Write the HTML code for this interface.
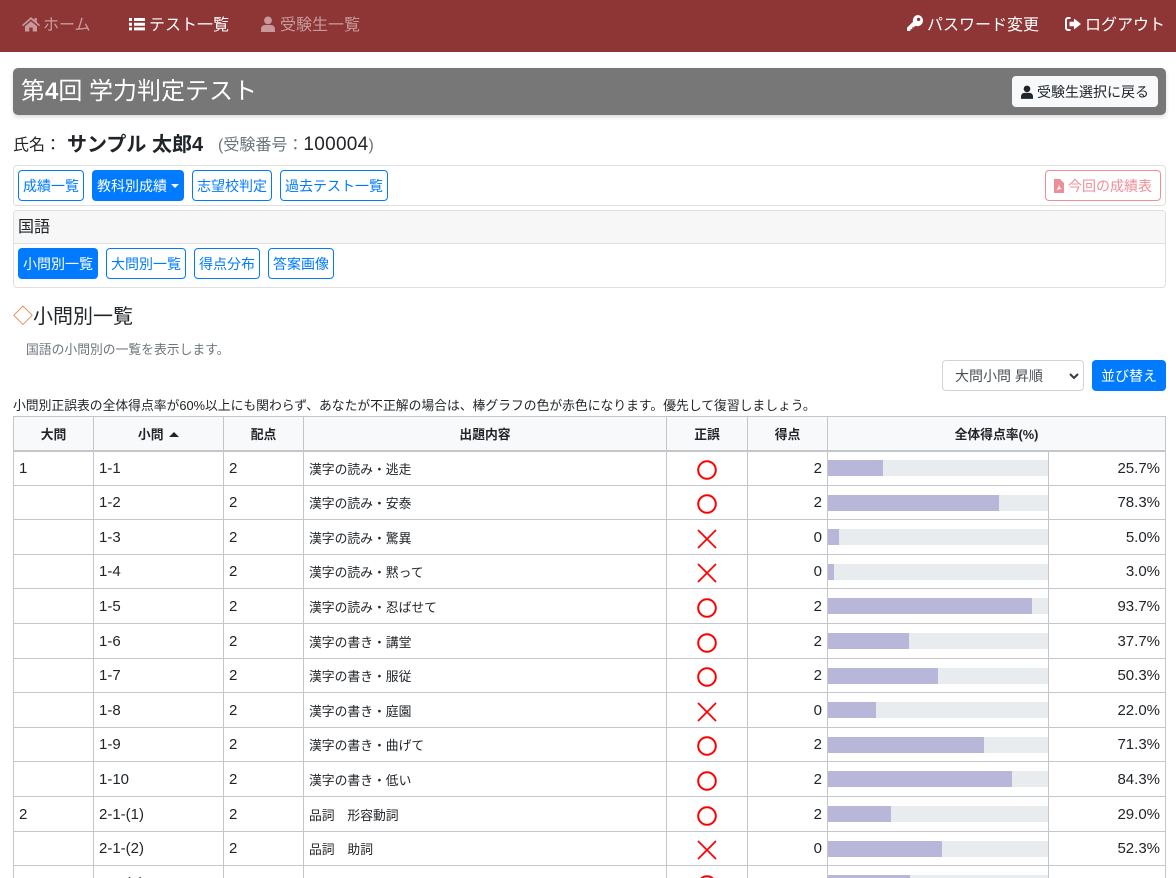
<!DOCTYPE html>
<html lang="ja">
<head>
<meta charset="utf-8">
<title>小問別一覧</title>
<style>
*{box-sizing:border-box}
html,body{margin:0;padding:0;width:1176px;height:878px;overflow:hidden;background:#fff}
body{font-family:"Liberation Sans","Noto Sans CJK JP",sans-serif;color:#212529;font-size:16px;position:relative}
.abs{position:absolute;white-space:nowrap}
nav{position:absolute;left:0;top:0;width:1176px;height:52px;background:#8e3535}
nav .i{position:absolute;top:15px;line-height:22px;font-size:16px;color:#fff;white-space:nowrap}
nav .dim{color:rgba(255,255,255,.5)}
nav svg{position:absolute;left:0}
.bar{position:absolute;left:13px;top:68px;width:1153px;height:47px;background:#777;border-radius:5px;box-shadow:0 2px 4px rgba(0,0,0,.15)}
.bar h1{position:absolute;left:8px;top:6px;margin:0;font-size:24px;font-weight:400;line-height:36px;color:#fff;white-space:nowrap}
.btn{position:absolute;display:block;height:31px;line-height:30px;font-size:14px;text-align:center;border:1px solid #007bff;border-radius:4px;color:#007bff;background:#fff;white-space:nowrap}
.btn.on{background:#007bff;color:#fff}
.panel{position:absolute;left:13px;width:1153px;border:1px solid #dfdfdf;border-radius:4px}
table{position:absolute;left:13px;top:416px;width:1152px;border-collapse:collapse;table-layout:fixed;font-size:15px}
th,td{border:1px solid #c4c6ca;padding:0 5px;overflow:hidden;white-space:nowrap}
th{height:34px;padding-top:1px;background:#f8f9fa;font-size:12.8px;font-weight:700;text-align:center;border-bottom:2px solid #c4c6ca}
td{vertical-align:middle}
td.q{font-size:12.8px}
td.r{text-align:right}
td.c{text-align:center;padding:0}
td.c svg{display:block;margin:3px auto 0}
td.b{padding:0;border-right:1px solid #c4c6ca}
.pg{height:16px;background:#e9ecef}
.pg i{display:block;height:16px;background:#b8b7d9}
</style>
</head>
<body>
<nav>
  <div class="i dim" style="left:22px;padding-left:21px"><svg width="18" height="16" viewBox="0 0 18 16" style="top:1px"><path fill="#c69a9a" d="M9 1 L12.5 4V2h2.3v4.1L18 9l-1 1.2L9 3.4 1 10.2 0 9z M3 10.3 9 5.2l6 5.1V15.5h-4.3v-4H7.3v4H3z"/></svg>ホーム</div>
  <div class="i" style="left:129px;padding-left:20px"><svg width="16" height="16" viewBox="0 0 16 16" style="top:1px"><path fill="#fff" d="M0 2h3v3H0zM5 2h11v3H5zM0 6.7h3v3H0zM5 6.7h11v3H5zM0 11.4h3v3H0zM5 11.4h11v3H5z"/></svg>テスト一覧</div>
  <div class="i dim" style="left:261px;padding-left:19px"><svg width="14" height="16" viewBox="0 0 14 16" style="top:1px"><circle cx="7" cy="4.4" r="3.9" fill="#c69a9a"/><path fill="#c69a9a" d="M0 16v-2.6C0 10.6 2 9 4.2 9h5.6C12 9 14 10.6 14 13.400V16z"/></svg>受験生一覧</div>
  <div class="i" style="left:907px;padding-left:20px"><svg width="16" height="17" viewBox="0 0 16 17" style="top:0"><path fill="#fff" d="M10.300 0a5.600 5.600 0 1 1-2 10.800L7 12.200H5.300v1.900H3.400V16H0v-3.200l6-6A5.600 5.600 0 0 1 10.300 0zm1.300 2.700a1.700 1.700 0 1 0 0 3.400 1.700 1.700 0 0 0 0-3.400z"/></svg>パスワード変更</div>
  <div class="i" style="left:1065px;padding-left:20px"><svg width="16" height="14" viewBox="0 0 16 14" style="top:2px"><path fill="#fff" d="M5.500 0v2H3a1 1 0 0 0-1 1v8a1 1 0 0 0 1 1h2.500v2H3a3 3 0 0 1-3-3V3a3 3 0 0 1 3-3z"/><path fill="#fff" d="M9 1.500 16 7l-7 5.500V9.300H4.500V4.700H9z"/></svg>ログアウト</div>
</nav>

<div class="bar">
  <h1>第<b>4</b>回 学力判定テスト</h1>
  <div class="abs" style="left:999px;top:8px;width:146px;height:31px;background:#f8f9fa;border-radius:4px;font-size:14px;line-height:32px;padding-left:25px;color:#212529">
    <svg width="12" height="14" viewBox="0 0 14 16" style="position:absolute;left:9px;top:9px"><circle cx="7" cy="4.400" r="3.900" fill="#212529"/><path fill="#212529" d="M0 16v-2.600C0 10.600 2 9 4.200 9h5.600C12 9 14 10.600 14 13.400V16z"/></svg>受験生選択に戻る
  </div>
</div>

<div class="abs" style="left:13px;top:134px;line-height:24px">氏名：</div>
<div class="abs" style="left:67px;top:131px;line-height:28px;font-size:20px;font-weight:700">サンプル 太郎4</div>
<div class="abs" style="left:218px;top:133px;line-height:24px;color:#6c757d">(受験番号：<span style="color:#212529;font-size:19px;font-weight:400;letter-spacing:.3px">100004</span>)</div>

<div class="panel" style="top:165px;height:41px"></div>
<a class="btn" style="left:18px;top:170px;width:66px">成績一覧</a>
<a class="btn on" style="left:92px;top:170px;width:92px;padding-right:12px">教科別成績<span style="position:absolute;right:4px;top:13px;border:4px solid transparent;border-top-color:#fff;border-bottom:0"></span></a>
<a class="btn" style="left:192px;top:170px;width:80px">志望校判定</a>
<a class="btn" style="left:280px;top:170px;width:108px">過去テスト一覧</a>
<a class="btn" style="left:1045px;top:170px;width:116px;border-color:#ee8e98;color:#f08f99;padding-left:14px"><svg width="10" height="14" viewBox="0 0 10 14" style="position:absolute;left:8px;top:8px"><path fill="#ee8e98" d="M0 0h6l4 4v10H0z"/><path fill="#fff" d="M2 11.500C4 10 5 7 4.800 5.300 5.500 8 6.300 9.300 8 10 6 10 4 10.300 2 11.500z"/></svg>今回の成績表</a>

<div class="panel" style="top:210px;height:78px"></div>
<div class="abs" style="left:14px;top:211px;width:1151px;height:33px;background:#f7f7f7;border-bottom:1px solid #dfdfdf;border-radius:3px 3px 0 0;padding-left:4px;line-height:33px;font-size:16px">国語</div>
<a class="btn on" style="left:18px;top:248px;width:80px">小問別一覧</a>
<a class="btn" style="left:106px;top:248px;width:80px">大問別一覧</a>
<a class="btn" style="left:194px;top:248px;width:66px">得点分布</a>
<a class="btn" style="left:268px;top:248px;width:66px">答案画像</a>

<div class="abs" style="left:13px;top:303px;font-size:20px;line-height:28px"><span style="color:#e0792c">◇</span>小問別一覧</div>
<div class="abs" style="left:26px;top:341px;font-size:12.8px;line-height:18px;color:#6c757d">国語の小問別の一覧を表示します。</div>

<div class="abs" style="left:942px;top:360px;width:142px;height:31px;border:1px solid #ced4da;border-radius:4px;font-size:14px;line-height:30px;padding-left:12px;color:#495057">大問小問 昇順
  <svg width="10" height="7" viewBox="0 0 10 7" style="position:absolute;right:4px;top:12px"><path d="M1 1l4 4 4-4" fill="none" stroke="#343a40" stroke-width="2"/></svg>
</div>
<a class="btn on" style="left:1092px;top:360px;width:74px">並び替え</a>

<div class="abs" style="left:13px;top:397px;font-size:12.8px;line-height:18px">小問別正誤表の全体得点率が60%以上にも関わらず、あなたが不正解の場合は、棒グラフの色が赤色になります。優先して復習しましょう。</div>

<table>
<colgroup><col style="width:80px"><col style="width:130px"><col style="width:80px"><col style="width:363px"><col style="width:81px"><col style="width:80px"><col style="width:221px"><col style="width:117px"></colgroup>
<tr><th>大問</th><th>小問 <span style="display:inline-block;border:5px solid transparent;border-bottom-color:#212529;border-top:0;vertical-align:2px;margin-left:2px"></span></th><th>配点</th><th>出題内容</th><th>正誤</th><th>得点</th><th colspan="2">全体得点率(%)</th></tr>

<tr style="height:35px"><td>1</td><td>1-1</td><td>2</td><td class="q">漢字の読み・逃走</td><td class="c"><svg width="20" height="20"><circle cx="10" cy="10" r="8.800" fill="none" stroke="#f00" stroke-width="2"/></svg></td><td class="r">2</td><td class="b"><div class="pg"><i style="width:25.2%"></i></div></td><td class="r">25.7%</td></tr>
<tr style="height:34px"><td></td><td>1-2</td><td>2</td><td class="q">漢字の読み・安泰</td><td class="c"><svg width="20" height="20"><circle cx="10" cy="10" r="8.800" fill="none" stroke="#f00" stroke-width="2"/></svg></td><td class="r">2</td><td class="b"><div class="pg"><i style="width:77.7%"></i></div></td><td class="r">78.3%</td></tr>
<tr style="height:35px"><td></td><td>1-3</td><td>2</td><td class="q">漢字の読み・驚異</td><td class="c"><svg width="20" height="20"><path d="M1 1l18 18M19 1L1 19" fill="none" stroke="#f00" stroke-width="1.700"/></svg></td><td class="r">0</td><td class="b"><div class="pg"><i style="width:5%"></i></div></td><td class="r">5.0%</td></tr>
<tr style="height:34px"><td></td><td>1-4</td><td>2</td><td class="q">漢字の読み・黙って</td><td class="c"><svg width="20" height="20"><path d="M1 1l18 18M19 1L1 19" fill="none" stroke="#f00" stroke-width="1.700"/></svg></td><td class="r">0</td><td class="b"><div class="pg"><i style="width:2.8%"></i></div></td><td class="r">3.0%</td></tr>
<tr style="height:35px"><td></td><td>1-5</td><td>2</td><td class="q">漢字の読み・忍ばせて</td><td class="c"><svg width="20" height="20"><circle cx="10" cy="10" r="8.800" fill="none" stroke="#f00" stroke-width="2"/></svg></td><td class="r">2</td><td class="b"><div class="pg"><i style="width:92.8%"></i></div></td><td class="r">93.7%</td></tr>
<tr style="height:35px"><td></td><td>1-6</td><td>2</td><td class="q">漢字の書き・講堂</td><td class="c"><svg width="20" height="20"><circle cx="10" cy="10" r="8.800" fill="none" stroke="#f00" stroke-width="2"/></svg></td><td class="r">2</td><td class="b"><div class="pg"><i style="width:37%"></i></div></td><td class="r">37.7%</td></tr>
<tr style="height:34px"><td></td><td>1-7</td><td>2</td><td class="q">漢字の書き・服従</td><td class="c"><svg width="20" height="20"><circle cx="10" cy="10" r="8.800" fill="none" stroke="#f00" stroke-width="2"/></svg></td><td class="r">2</td><td class="b"><div class="pg"><i style="width:50%"></i></div></td><td class="r">50.3%</td></tr>
<tr style="height:35px"><td></td><td>1-8</td><td>2</td><td class="q">漢字の書き・庭園</td><td class="c"><svg width="20" height="20"><path d="M1 1l18 18M19 1L1 19" fill="none" stroke="#f00" stroke-width="1.700"/></svg></td><td class="r">0</td><td class="b"><div class="pg"><i style="width:22%"></i></div></td><td class="r">22.0%</td></tr>
<tr style="height:34px"><td></td><td>1-9</td><td>2</td><td class="q">漢字の書き・曲げて</td><td class="c"><svg width="20" height="20"><circle cx="10" cy="10" r="8.800" fill="none" stroke="#f00" stroke-width="2"/></svg></td><td class="r">2</td><td class="b"><div class="pg"><i style="width:70.9%"></i></div></td><td class="r">71.3%</td></tr>
<tr style="height:35px"><td></td><td>1-10</td><td>2</td><td class="q">漢字の書き・低い</td><td class="c"><svg width="20" height="20"><circle cx="10" cy="10" r="8.800" fill="none" stroke="#f00" stroke-width="2"/></svg></td><td class="r">2</td><td class="b"><div class="pg"><i style="width:83.6%"></i></div></td><td class="r">84.3%</td></tr>
<tr style="height:35px"><td>2</td><td>2-1-(1)</td><td>2</td><td class="q">品詞　形容動詞</td><td class="c"><svg width="20" height="20"><circle cx="10" cy="10" r="8.800" fill="none" stroke="#f00" stroke-width="2"/></svg></td><td class="r">2</td><td class="b"><div class="pg"><i style="width:28.6%"></i></div></td><td class="r">29.0%</td></tr>
<tr style="height:34px"><td></td><td>2-1-(2)</td><td>2</td><td class="q">品詞　助詞</td><td class="c"><svg width="20" height="20"><path d="M1 1l18 18M19 1L1 19" fill="none" stroke="#f00" stroke-width="1.700"/></svg></td><td class="r">0</td><td class="b"><div class="pg"><i style="width:51.8%"></i></div></td><td class="r">52.3%</td></tr>
<tr style="height:35px"><td></td><td>2-1-(3)</td><td>2</td><td class="q">品詞　副詞</td><td class="c"><svg width="20" height="20"><circle cx="10" cy="10" r="8.800" fill="none" stroke="#f00" stroke-width="2"/></svg></td><td class="r">2</td><td class="b"><div class="pg"><i style="width:37.3%"></i></div></td><td class="r">37.7%</td></tr>
</table>
</body>
</html>
